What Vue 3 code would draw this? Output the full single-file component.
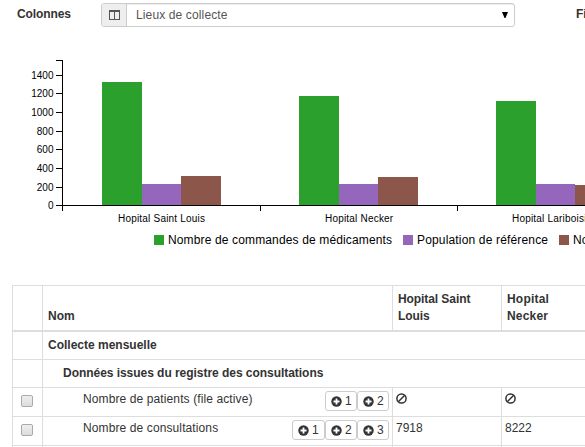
<script setup>
const ticks = [
  { v: 1400, y: 75 }, { v: 1200, y: 93 }, { v: 1000, y: 112 }, { v: 800, y: 131 },
  { v: 600, y: 149 }, { v: 400, y: 168 }, { v: 200, y: 187 }, { v: 0, y: 205 },
]
const groups = [
  { name: 'Hopital Saint Louis', x: 102, tops: [82, 184, 176], label: 118 },
  { name: 'Hopital Necker', x: 299, tops: [96, 184, 177], label: 325 },
  { name: 'Hopital Lariboisiere', x: 496, tops: [101, 184, 185], label: 512 },
]
const colors = ['#2ca02c', '#9467bd', '#8c564b']
const offsets = [0, 40, 79]
const widths = [40, 39, 40]
const rows = [
  { name: 'Nombre de patients (file active)', levels: [1, 2], values: null },
  { name: 'Nombre de consultations', levels: [1, 2, 3], values: ['7918', '8222'] },
]
</script>

<template>
  <main class="page">
    <header class="toolbar">
      <label class="label">Colonnes</label>
      <div class="input-group">
        <span class="addon">
          <svg width="11" height="11" viewBox="0 0 11 11" shape-rendering="crispEdges">
            <path d="M0 .5H11M0 1.5H11M.5 1V10M5.5 1V10M10.5 1V10M0 9.5H11" fill="none" stroke="#555" />
          </svg>
        </span>
        <div class="select">
          <span class="select-text">Lieux de collecte</span>
          <svg width="6" height="6" viewBox="0 0 6 6"><path d="M0 0H6L3.5 6H2.5Z" fill="#000" /></svg>
        </div>
      </div>
      <label class="label filters">Filtres</label>
    </header>

    <svg class="chart" width="585" height="203" viewBox="0 50 585 203">
      <g v-for="g in groups" :key="g.name" shape-rendering="crispEdges">
        <rect
          v-for="(t, i) in g.tops" :key="i"
          :x="g.x + offsets[i]" :y="t" :width="widths[i]" :height="205 - t" :fill="colors[i]"
        />
      </g>
      <path
        d="M56 60.5H62.5V205.5H585M62.5 205V211M260.5 205V211M457.5 205V211"
        fill="none" stroke="#000" shape-rendering="crispEdges"
      />
      <g v-for="t in ticks" :key="t.v">
        <path :d="`M56 ${t.y + 0.5}H62`" stroke="#000" shape-rendering="crispEdges" />
        <text class="tick" x="53.5" :y="t.y + 4" text-anchor="end">{{ t.v }}</text>
      </g>
      <text
        v-for="g in groups" :key="g.name" class="tick site" :x="g.label" y="222"
      >{{ g.name }}</text>
      <g class="legend">
        <rect x="154" y="235" width="10" height="10" :fill="colors[0]" />
        <text x="168" y="244" textLength="224">Nombre de commandes de médicaments</text>
        <rect x="403" y="235" width="10" height="10" :fill="colors[1]" />
        <text x="417" y="244" textLength="131">Population de référence</text>
        <rect x="559" y="235" width="10" height="10" :fill="colors[2]" />
        <text x="573" y="244">Nombre</text>
      </g>
    </svg>

    <section class="table">
      <div class="row head">
        <div class="cell"></div>
        <div class="cell">Nom</div>
        <div class="cell louis">Hopital Saint<br>Louis</div>
        <div class="cell necker">Hopital<br>Necker</div>
      </div>
      <div class="row group">
        <div class="cell"></div>
        <div class="cell wide">Collecte mensuelle</div>
      </div>
      <div class="row group sub">
        <div class="cell"></div>
        <div class="cell wide">Données issues du registre des consultations</div>
      </div>
      <div v-for="r in rows" :key="r.name" class="row item">
        <div class="cell check"><i class="box"></i></div>
        <div class="cell name">
          <span class="name-text">{{ r.name }}</span>
          <div class="buttons">
            <button v-for="n in r.levels" :key="n" class="btn">
              <svg width="11" height="11" viewBox="0 0 11 11">
                <circle cx="5.5" cy="5.5" r="5.2" fill="#333" />
                <path d="M5.5 2.5V8.5M2.5 5.5H8.5" stroke="#fff" stroke-width="1.8" />
              </svg>
              <span>{{ n }}</span>
            </button>
          </div>
        </div>
        <div v-for="i in 2" :key="i" class="cell value">
          <span v-if="r.values">{{ r.values[i - 1] }}</span>
          <svg v-else class="ban" width="11" height="11" viewBox="0 0 11 11">
            <circle cx="5.5" cy="5.5" r="4.6" fill="none" stroke="#333" stroke-width="1.5" />
            <path d="M2.3 8.7L8.7 2.3" stroke="#333" stroke-width="1.5" />
          </svg>
        </div>
      </div>
      <div class="row item">
        <div v-for="i in 4" :key="i" class="cell"></div>
      </div>
    </section>
  </main>
</template>

<style>
html, body { overflow: hidden; background: #fff; }
</style>

<style scoped>
.page {
  width: 585px;
  height: 447px;
  overflow: hidden;
  font: 12px/17px "Liberation Sans", Arial, sans-serif;
  color: #333;
}
.toolbar { display: flex; height: 50px; padding: 3px 0 0 17px; box-sizing: border-box; }
.label { width: 84px; flex: none; font-weight: bold; line-height: 22px; letter-spacing: -0.1px; }
.input-group {
  display: flex; width: 414px; height: 24px; flex: none; box-sizing: border-box;
  border: 1px solid #ccc; border-radius: 3px; overflow: hidden;
}
.addon {
  width: 25px; flex: none; box-sizing: border-box; display: flex; align-items: center;
  padding-left: 7px; background: #eee; border-right: 1px solid #ccc;
}
.select {
  flex: 1; display: flex; align-items: center; justify-content: space-between;
  padding: 0 6px 0 9px; color: #555; box-shadow: inset 0 1px 1px rgba(0, 0, 0, .075);
}
.select-text { letter-spacing: 0.13px; }
.filters { margin-left: 61px; }
.chart { display: block; }
.tick { font-size: 10px; fill: #000; }
.site { letter-spacing: 0.2px; }
.legend text { font-size: 12px; fill: #000; }
.table { margin: 32px 0 0 12px; width: 620px; border-top: 1px solid #ddd; border-left: 1px solid #ddd; }
.row { display: grid; grid-template-columns: 30px 350px 109px 130px; }
.cell { border-right: 1px solid #ddd; border-bottom: 1px solid #ddd; box-sizing: border-box; min-width: 0; }
.wide { grid-column: 2 / 5; }
.head { height: 46px; font-weight: bold; }
.head .cell { display: flex; align-items: flex-end; padding: 0 5px 5px; border-bottom-width: 2px; white-space: nowrap; }
.louis { letter-spacing: -0.08px; }
.necker { letter-spacing: 0.2px; }
.group { height: 28px; font-weight: bold; }
.group .cell { padding: 5px; }
.sub .wide { padding-left: 20px; letter-spacing: -0.04px; }
.item { height: 29px; }
.name { display: flex; justify-content: space-between; padding: 3px 3px 0 40px; white-space: nowrap; }
.name-text { letter-spacing: 0.11px; }
.buttons { display: flex; }
.btn {
  display: flex; align-items: center; gap: 3px; width: 32px; height: 20px; box-sizing: border-box;
  padding: 0 0 0 5px; border: 1px solid #ccc; border-radius: 3px; background: #fff;
  font: inherit; color: #333;
}
.btn:first-child:nth-last-child(3) { width: 33px; }
.check { padding: 7px 0 0 8px; }
.box {
  display: block; width: 12px; height: 12px; box-sizing: border-box;
  border: 1px solid #aaa; border-radius: 2px; background: linear-gradient(#eee, #ddd);
}
.value { padding: 3px; }
.ban { display: block; margin-top: 2px; }
</style>
